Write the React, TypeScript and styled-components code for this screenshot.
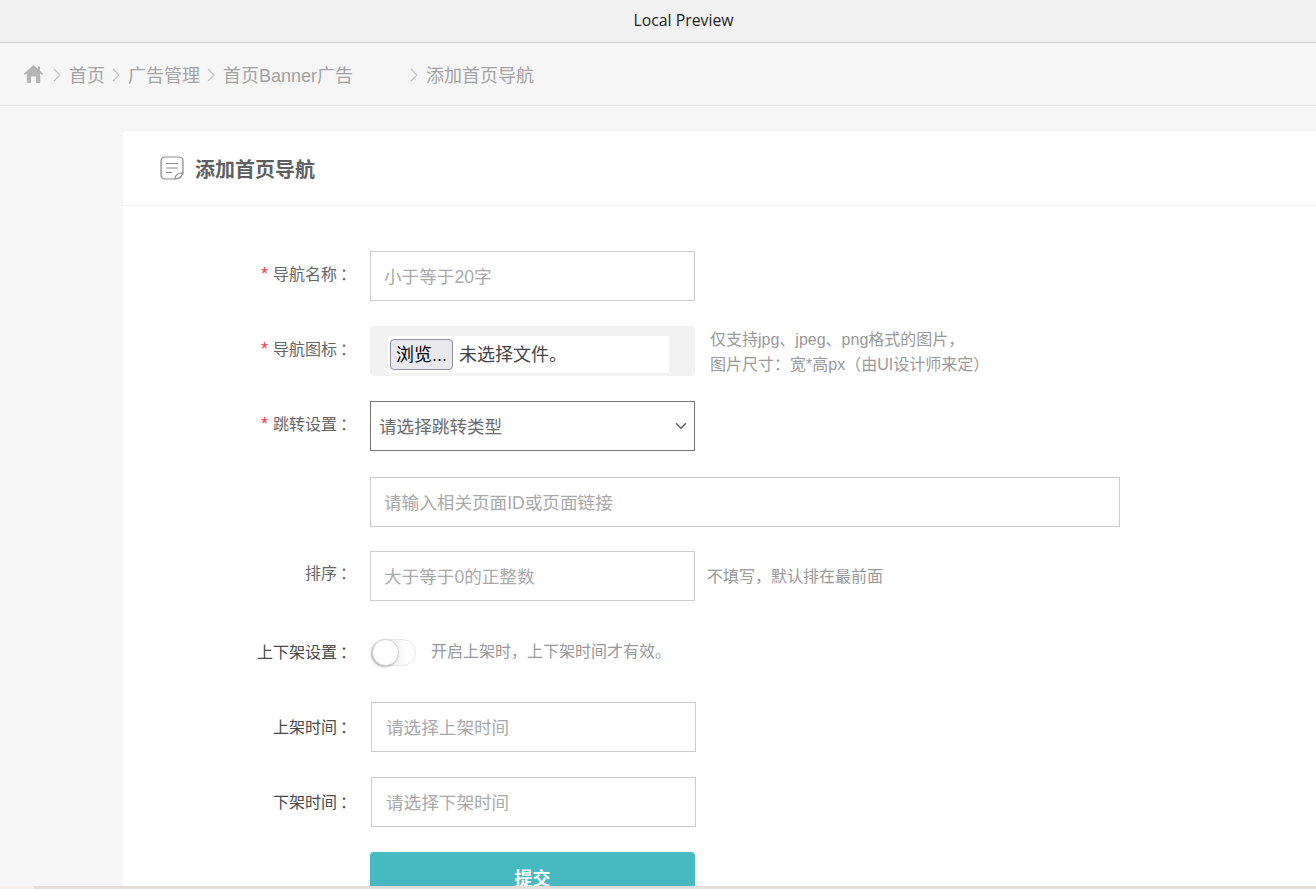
import React from "react";
import styled, { createGlobalStyle } from "styled-components";
import { ChevronDown } from "lucide-react";

const GlobalStyle = createGlobalStyle`
  html, body {
    margin: 0;
    padding: 0;
    height: 100%;
    overflow: hidden;
    background: #f6f6f6;
  }
  * {
    box-sizing: border-box;
  }
  body {
    font-family: "Liberation Sans", "Noto Sans CJK SC", sans-serif;
  }
`;

const Page = styled.div`
  height: 889px;
  overflow: hidden;
  position: relative;
  background: #f6f6f6;
`;

const PreviewBar = styled.div`
  height: 43px;
  background: #f1f1f1;
  border-bottom: 1px solid #cfcfcf;
  display: flex;
  align-items: center;
  justify-content: center;
  padding: 0 0 3px 51px;
  font-family: "Open Sans", sans-serif;
  font-size: 15.8px;
  color: #222;
`;

const Breadcrumb = styled.nav`
  height: 63px;
  border-bottom: 1px solid #e6e6e6;
  display: flex;
  align-items: center;
  padding-left: 24px;
  font-size: 18px;
  color: #a3a3a3;
`;

const Crumb = styled.span<{ $after?: number }>`
  margin-right: ${(p) => p.$after ?? 0}px;
  padding-top: 4px;
  line-height: 26px;
`;

const Separator = styled.svg<{ $first?: boolean }>`
  width: 8px;
  height: 14px;
  margin: 1px 8px 0 ${(p) => (p.$first ? 10 : 7)}px;
  fill: none;
  stroke: #c4c4c4;
  stroke-width: 1.2;
`;

const Content = styled.main`
  padding: 25px 0 0 123px;
`;

const Card = styled.section`
  background: #fff;
  border-radius: 4px 0 0 0;
  min-height: 760px;
`;

const CardHeader = styled.header`
  height: 75px;
  border-bottom: 1px solid #f2f2f2;
  display: flex;
  align-items: center;
  gap: 11px;
  padding-left: 37px;
`;

const CardTitle = styled.h2`
  margin: 0;
  font-size: 20px;
  font-weight: 700;
  color: #5f5f5f;
`;

const Form = styled.form`
  padding-top: 45px;
  display: flex;
  flex-direction: column;
  gap: 25px;
`;

const Row = styled.div<{ $height?: number; $top?: number }>`
  display: flex;
  align-items: flex-start;
  gap: 17px;
  margin-top: ${(p) => p.$top ?? 0}px;
  min-height: ${(p) => p.$height ?? 50}px;
`;

const Label = styled.label<{ $pad?: number; $strong?: boolean }>`
  width: 230px;
  flex-shrink: 0;
  text-align: right;
  font-size: 16px;
  line-height: 24px;
  padding-top: ${(p) => p.$pad ?? 11}px;
  color: ${(p) => (p.$strong ? "#4a4a4a" : "#666")};
`;

const Colon = styled.span`
  display: inline-block;
  width: 13px;
  margin-left: 3px;
  text-align: left;
`;

const Required = styled.span`
  color: #f5394c;
  font-size: 18px;
  margin-right: 5px;
`;

const TextInput = styled.input<{ $width?: number; $shift?: number }>`
  width: ${(p) => p.$width ?? 325}px;
  height: 50px;
  margin-left: ${(p) => p.$shift ?? 0}px;
  padding: 2px 13px 0 ${(p) => (p.$shift ? 14 : 13)}px;
  border: 1px solid #cccccc;
  border-radius: 0;
  outline: none;
  background: #fff;
  font-family: inherit;
  font-size: 17.6px;
  color: #333;

  &::placeholder {
    color: #a9a9a9;
    opacity: 1;
  }
`;

const FileBox = styled.div`
  width: 325px;
  height: 50px;
  background: #f2f2f2;
  border-radius: 4px;
  padding: 10px 26px 3px 18px;
`;

const FileInner = styled.div`
  height: 37px;
  background: #fff;
  display: flex;
  align-items: center;
  gap: 6px;
  padding-left: 2px;
  font-size: 18px;
  color: #444;
`;

const FileName = styled.span`
  margin-bottom: 3px;
`;

const BrowseButton = styled.button`
  width: 63px;
  height: 31px;
  padding: 0;
  border: 1px solid #8f8f9d;
  border-radius: 4px;
  background: #e9e9ed;
  font-family: inherit;
  font-size: 18px;
  line-height: 1;
  color: #000;
`;

const Hint = styled.p`
  margin: 1px 0 -1px -2px;
  font-size: 16px;
  line-height: 25px;
  color: #999;
`;

const SideHint = styled.span<{ $left?: number; $top?: number }>`
  margin: ${(p) => p.$top ?? 0}px 0 0 ${(p) => p.$left ?? 0}px;
  font-size: 16px;
  line-height: 24px;
  color: #999;
`;

const SelectWrap = styled.div`
  position: relative;
  width: 325px;
  height: 50px;

  svg {
    position: absolute;
    right: 5px;
    top: 16px;
    color: #666;
    pointer-events: none;
  }
`;

const Select = styled.select`
  width: 100%;
  height: 100%;
  padding: 2px 30px 0 8px;
  appearance: none;
  border: 1px solid #767676;
  border-radius: 0;
  outline: none;
  background: #fff;
  font-family: inherit;
  font-size: 17.6px;
  color: #6b6b6b;
`;

const Switch = styled.span`
  position: relative;
  display: block;
  width: 44px;
  height: 27px;
  margin-left: 2px;
  border: 1px solid #e6e6e6;
  border-radius: 14px;
  background: linear-gradient(to right, #f0f0f0 50%, #fff 80%);
`;

const SwitchKnob = styled.span`
  position: absolute;
  left: -1px;
  top: -1px;
  width: 27px;
  height: 27px;
  border-radius: 50%;
  background: #fff;
  border: 1px solid #d4d4d4;
  box-shadow: -1px 1px 2px rgba(0, 0, 0, 0.3);
`;

const SubmitButton = styled.button`
  width: 325px;
  height: 50px;
  border: none;
  border-radius: 4px;
  background: #47bac1;
  font-family: inherit;
  font-size: 18px;
  font-weight: 700;
  color: #fff;
  padding: 0;
`;

const BottomStrip = styled.div`
  position: absolute;
  left: 0;
  right: 0;
  bottom: 0;
  height: 3px;
  background: linear-gradient(to right, #f6f1ec 34px, #e4dcd6 34px);
`;

const HomeIcon = () => (
  <svg width="19" height="18" viewBox="0 0 19 18" fill="#b5b5b5" aria-hidden="true">
    <path d="M9.5 0 0 8.6 0.9 10 2.8 8.6V17a1 1 0 0 0 1 1H7V11.5H12V18h3.2a1 1 0 0 0 1-1V8.6L18.1 10 19 8.6 16 5.8V1.6H14V4Z" />
  </svg>
);

const NoteIcon = () => (
  <svg width="24" height="24" viewBox="0 0 24 24" fill="none" stroke="#8a8a8a" strokeWidth="1.2" aria-hidden="true">
    <path d="M15 23H5a4 4 0 0 1-4-4V5a4 4 0 0 1 4-4h14a4 4 0 0 1 4 4v12" />
    <path d="M15 23c0-4 3-6 8-6-1 3-4 6-8 6Z" />
    <path d="M6 7.5h12M6 12h12M6 16.5h6" />
  </svg>
);

const Chevron = ({ first }: { first?: boolean }) => (
  <Separator $first={first} viewBox="0 0 8 14" aria-hidden="true">
    <path d="M1 1l6 6-6 6" />
  </Separator>
);

export default function App() {
  return (
    <Page>
      <GlobalStyle />
      <PreviewBar>Local Preview</PreviewBar>
      <Breadcrumb>
        <HomeIcon />
        <Chevron first />
        <Crumb>首页</Crumb>
        <Chevron />
        <Crumb>广告管理</Crumb>
        <Chevron />
        <Crumb $after={50}>首页Banner广告</Crumb>
        <Chevron />
        <Crumb>添加首页导航</Crumb>
      </Breadcrumb>
      <Content>
        <Card>
          <CardHeader>
            <NoteIcon />
            <CardTitle>添加首页导航</CardTitle>
          </CardHeader>
          <Form onSubmit={(e) => e.preventDefault()}>
            <Row>
              <Label>
                <Required>*</Required>导航名称<Colon>：</Colon>
              </Label>
              <TextInput placeholder="小于等于20字" />
            </Row>
            <Row>
              <Label>
                <Required>*</Required>导航图标<Colon>：</Colon>
              </Label>
              <FileBox>
                <FileInner>
                  <BrowseButton type="button">浏览...</BrowseButton>
                  <FileName>未选择文件。</FileName>
                </FileInner>
              </FileBox>
              <Hint>
                仅支持jpg、jpeg、png格式的图片，
                <br />
                图片尺寸：宽*高px（由UI设计师来定）
              </Hint>
            </Row>
            <Row>
              <Label>
                <Required>*</Required>跳转设置<Colon>：</Colon>
              </Label>
              <SelectWrap>
                <Select defaultValue="">
                  <option value="">请选择跳转类型</option>
                </Select>
                <ChevronDown size={18} strokeWidth={2.2} />
              </SelectWrap>
            </Row>
            <Row $top={1}>
              <Label />
              <TextInput $width={750} placeholder="请输入相关页面ID或页面链接" />
            </Row>
            <Row $top={-1}>
              <Label>
                排序<Colon>：</Colon>
              </Label>
              <TextInput placeholder="大于等于0的正整数" />
              <SideHint $left={-5} $top={14}>
                不填写，默认排在最前面
              </SideHint>
            </Row>
            <Row $height={27} $top={13}>
              <Label $pad={2} $strong>
                上下架设置<Colon>：</Colon>
              </Label>
              <Switch>
                <SwitchKnob />
              </Switch>
              <SideHint $left={-2} $top={1}>
                开启上架时，上下架时间才有效。
              </SideHint>
            </Row>
            <Row $top={11}>
              <Label $pad={14} $strong>
                上架时间<Colon>：</Colon>
              </Label>
              <TextInput $shift={1} placeholder="请选择上架时间" />
            </Row>
            <Row>
              <Label $pad={14} $strong>
                下架时间<Colon>：</Colon>
              </Label>
              <TextInput $shift={1} placeholder="请选择下架时间" />
            </Row>
            <Row>
              <Label />
              <SubmitButton type="submit">提交</SubmitButton>
            </Row>
          </Form>
        </Card>
      </Content>
      <BottomStrip />
    </Page>
  );
}
